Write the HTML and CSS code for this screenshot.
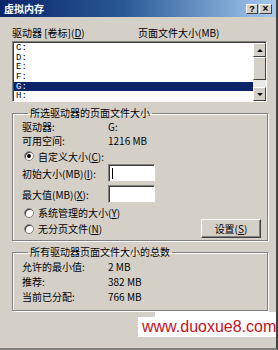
FILE: index.html
```html
<!DOCTYPE html>
<html lang="zh">
<head>
<meta charset="utf-8">
<title>虚拟内存</title>
<link rel="stylesheet" href="styles.css">
</head>
<body>
<div class="window">
  <div class="titlebar">
    <span class="title">虚拟内存</span>
    <div class="tbtns">
      <span class="tbtn">?</span>
      <span class="tbtn close">×</span>
    </div>
  </div>
  <div class="content">
    <div class="headers">
      <span class="h1">驱动器 [卷标](<u>D</u>)</span>
      <span class="h2">页面文件大小(MB)</span>
    </div>
    <div class="listbox">
      <div class="items">
        <div class="item">C:</div>
        <div class="item">D:</div>
        <div class="item">E:</div>
        <div class="item">F:</div>
        <div class="item sel">G:</div>
        <div class="item">H:</div>
      </div>
      <div class="scrollbar">
        <div class="sbtn"><span class="tri up"></span></div>
        <div class="thumb"></div>
        <div class="track"></div>
        <div class="sbtn"><span class="tri down"></span></div>
      </div>
    </div>

    <fieldset class="group g1">
      <legend>所选驱动器的页面文件大小</legend>
      <div class="row r14 top"><span class="lab">驱动器:</span><span>G:</span></div>
      <div class="row r14"><span class="lab">可用空间:</span><span>1216 MB</span></div>
      <div class="radio-row first"><span class="radio on"></span><span>自定义大小(<u>C</u>):</span></div>
      <div class="row inrow"><span class="lab">初始大小(MB)(<u>I</u>):</span><span class="input"><span class="caret"></span></span></div>
      <div class="row inrow second"><span class="lab">最大值(MB)(<u>X</u>):</span><span class="input"></span></div>
      <div class="radio-row r2"><span class="radio"></span><span>系统管理的大小(<u>Y</u>)</span></div>
      <div class="last-row">
        <div class="radio-row"><span class="radio"></span><span>无分页文件(<u>N</u>)</span></div>
        <span class="button">设置(<u>S</u>)</span>
      </div>
    </fieldset>

    <fieldset class="group g2">
      <legend>所有驱动器页面文件大小的总数</legend>
      <div class="row r15 top"><span class="lab">允许的最小值:</span><span>2 MB</span></div>
      <div class="row r15"><span class="lab">推荐:</span><span>382 MB</span></div>
      <div class="row r15"><span class="lab">当前已分配:</span><span>766 MB</span></div>
    </fieldset>
  </div>
  <div class="wm-strip"></div>
  <div class="watermark">www.duoxue8.com</div>
</div>
</body>
</html>
```

FILE: styles.css
```css
* { box-sizing: border-box; }
html, body { margin: 0; padding: 0; }
body {
  width: 278px;
  height: 350px;
  overflow: hidden;
  background: #d4d0c8;
  font-family: "Noto Sans CJK SC", "Liberation Sans", sans-serif;
  font-size: 10px;
  color: #000;
}
u { text-decoration: underline; }

.window {
  position: relative;
  width: 278px;
  height: 350px;
  background: #d4d0c8;
  border-right: 2px solid #404040;
  border-bottom: 2px solid #808080;
}

.titlebar {
  height: 17px;
  display: flex;
  align-items: center;
  justify-content: space-between;
  padding: 0 4px 0 4px;
  background: linear-gradient(to right, #0a246a 0%, #2a5a96 45%, #a6caf0 100%);
}
.title {
  color: #fff;
  font-weight: bold;
  font-size: 10px;
  line-height: 12px;
}
.tbtns { display: flex; gap: 1px; margin-top: 1px; }
.tbtn {
  width: 12px;
  height: 10px;
  background: #d4d0c8;
  border-top: 1px solid #fff;
  border-left: 1px solid #fff;
  border-right: 1px solid #404040;
  border-bottom: 1px solid #404040;
  font-family: "Liberation Sans", sans-serif;
  font-weight: bold;
  font-size: 9px;
  line-height: 8px;
  text-align: center;
}
.tbtn.close { width: 13px; font-size: 10px; }

.content { padding: 0 8px 0 12px; }

.headers {
  display: flex;
  margin-top: 10px;
  height: 12px;
  line-height: 12px;
}
.h1 { width: 126px; }

.listbox {
  margin-top: 2px;
  height: 61px;
  width: 255px;
  display: flex;
  background: #fff;
  border-top: 1px solid #808080;
  border-left: 1px solid #808080;
  border-right: 1px solid #fff;
  border-bottom: 1px solid #fff;
  box-shadow: inset 1px 1px 0 #404040;
}
.items {
  flex: 1;
  padding: 1px 0 0 1px;
  overflow: hidden;
  font-family: "Liberation Mono", monospace;
  font-size: 9px;
}
.item {
  height: 9.7px;
  line-height: 10px;
  padding-left: 2px;
}
.item.sel { background: #0a246a; color: #fff; }

.scrollbar {
  width: 13px;
  display: flex;
  flex-direction: column;
  padding-top: 1px;
}
.sbtn {
  height: 14px;
  background: #d4d0c8;
  border-top: 1px solid #fff;
  border-left: 1px solid #fff;
  border-right: 1px solid #404040;
  border-bottom: 1px solid #404040;
  display: flex;
  align-items: center;
  justify-content: center;
}
.thumb {
  height: 23px;
  background: #d4d0c8;
  border-top: 1px solid #fff;
  border-left: 1px solid #fff;
  border-right: 1px solid #404040;
  border-bottom: 1px solid #404040;
}
.track { flex: 1; background: #ebe9e5; }
.tri { width: 0; height: 0; border-left: 3px solid transparent; border-right: 3px solid transparent; }
.tri.up { border-bottom: 3px solid #000; }
.tri.down { border-top: 3px solid #000; }

.group {
  margin: 0;
  width: 256px;
  border: 1px solid #808080;
  box-shadow: inset 1px 1px 0 #fff, 1px 1px 0 #fff;
  padding: 0 6px 0 9px;
}
.group legend {
  margin-left: 6px;
  padding: 0 2px;
  line-height: 12px;
  height: 12px;
}
.g1 { margin-top: 5px; padding-bottom: 2px; }
.g2 { margin-top: 5px; padding-bottom: 6px; }

.row { display: flex; align-items: center; }
.lab { width: 86px; }
.r14 { height: 14px; line-height: 14px; }
.r14.top { margin-top: 1px; }
.r15 { height: 15px; line-height: 15px; }
.r15.top { margin-top: 1px; }

.radio-row {
  display: flex;
  align-items: center;
  gap: 4px;
  padding-left: 2px;
  height: 14px;
}
.radio-row.first { margin-top: 1px; }
.radio-row.r2 { margin-top: 3px; height: 13px; }
.radio {
  width: 10px;
  height: 10px;
  border-radius: 50%;
  background: #fff;
  border: 1px solid #808080;
  box-shadow: inset 1px 1px 0 #404040;
  display: flex;
  align-items: center;
  justify-content: center;
}
.radio.on::after {
  content: "";
  width: 4px;
  height: 4px;
  border-radius: 50%;
  background: #000;
}

.inrow { height: 18px; margin-top: 1px; }
.inrow.second { margin-top: 3px; }
.input {
  width: 47px;
  height: 18px;
  background: #fff;
  border-top: 1px solid #808080;
  border-left: 1px solid #808080;
  border-right: 1px solid #fff;
  border-bottom: 1px solid #d4d0c8;
  box-shadow: inset 1px 1px 0 #404040;
  display: flex;
  align-items: center;
  padding-left: 3px;
}
.caret { width: 1px; height: 11px; background: #000; }

.last-row {
  display: flex;
  align-items: center;
  justify-content: space-between;
  height: 19px;
}
.button {
  width: 60px;
  height: 19px;
  line-height: 17px;
  text-align: center;
  background: #d4d0c8;
  border-top: 1px solid #fff;
  border-left: 1px solid #fff;
  border-right: 1px solid #404040;
  border-bottom: 1px solid #404040;
  box-shadow: inset -1px -1px 0 #808080;
}

.wm-strip {
  position: absolute;
  left: 155px;
  top: 312px;
  width: 121px;
  height: 6px;
  background: #fff;
}
.watermark {
  position: absolute;
  left: 138px;
  top: 317px;
  width: 138px;
  height: 20px;
  background: #fff;
  color: #c8101a;
  font-family: "Liberation Sans", sans-serif;
  font-size: 16px;
  line-height: 20px;
  padding-left: 4px;
  white-space: nowrap;
}
```
